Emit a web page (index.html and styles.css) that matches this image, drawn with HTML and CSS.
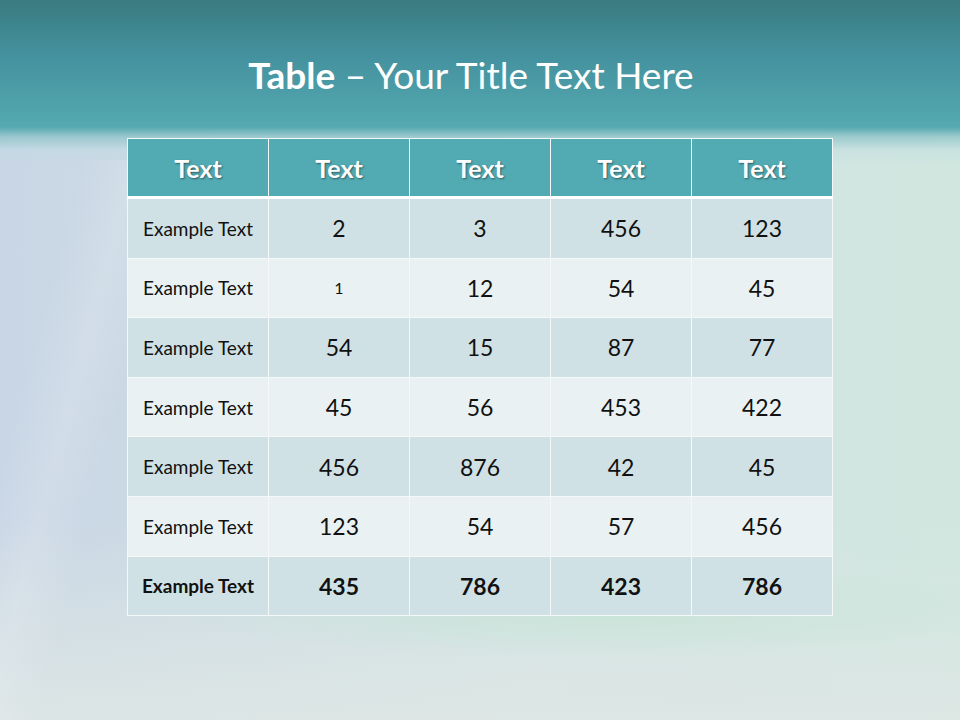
FILE: index.html
```html
<!DOCTYPE html>
<html>
<head>
<meta charset="utf-8">
<link rel="stylesheet" href="styles.css">
</head>
<body>
<div class="slide">
  <div class="band"></div>
  <div class="streak"></div>
  <div class="glow"></div>
  <div class="content">
    <h1 class="title"><b>Table</b> – Your Title Text Here</h1>
    <table class="grid">
      <thead>
        <tr><th>Text</th><th>Text</th><th>Text</th><th>Text</th><th>Text</th></tr>
      </thead>
      <tbody>
        <tr class="dark"><td class="lab">Example Text</td><td>2</td><td>3</td><td>456</td><td>123</td></tr>
        <tr class="light"><td class="lab">Example Text</td><td class="small">1</td><td>12</td><td>54</td><td>45</td></tr>
        <tr class="dark"><td class="lab">Example Text</td><td>54</td><td>15</td><td>87</td><td>77</td></tr>
        <tr class="light"><td class="lab">Example Text</td><td>45</td><td>56</td><td>453</td><td>422</td></tr>
        <tr class="dark"><td class="lab">Example Text</td><td>456</td><td>876</td><td>42</td><td>45</td></tr>
        <tr class="light"><td class="lab">Example Text</td><td>123</td><td>54</td><td>57</td><td>456</td></tr>
        <tr class="dark total"><td class="lab">Example Text</td><td>435</td><td>786</td><td>423</td><td>786</td></tr>
      </tbody>
    </table>
  </div>
</div>
</body>
</html>
```
FILE: styles.css
```css
html, body {
  margin: 0;
  padding: 0;
}
body {
  width: 960px;
  height: 720px;
  overflow: hidden;
  font-family: Lato, "Open Sans", sans-serif;
}
.slide {
  position: relative;
  width: 960px;
  height: 720px;
  background:
    linear-gradient(180deg, rgba(221,230,228,0) 520px, rgba(222,231,229,0.9) 720px),
    linear-gradient(90deg, #c9d6e5 0%, #cddbe4 25%, #d2e2e4 55%, #d0e7df 100%);
  overflow: hidden;
}
.band {
  position: absolute;
  left: 0;
  top: 0;
  width: 960px;
  height: 165px;
  background: linear-gradient(180deg, #3a7b80 0px, #4593a0 60px, #52a6ad 118px, #56a9b0 127px, rgba(140,195,200,0.75) 137px, rgba(190,220,225,0.4) 150px, rgba(205,225,230,0) 165px);
}
.streak {
  position: absolute;
  left: -40px;
  top: 160px;
  width: 200px;
  height: 560px;
  background: linear-gradient(105deg, rgba(255,255,255,0) 35%, rgba(255,255,255,0.14) 50%, rgba(255,255,255,0) 65%);
}
.glow {
  position: absolute;
  left: 150px;
  top: 560px;
  width: 900px;
  height: 100px;
  border-radius: 50%;
  background: radial-gradient(ellipse at center, rgba(195,228,212,0.7) 0%, rgba(200,230,215,0) 70%);
}
.content {
  position: relative;
  display: flex;
  flex-direction: column;
  align-items: center;
}
.title {
  margin: 51px 0 0 -18px;
  height: 87px;
  font-weight: normal;
  font-size: 37px;
  line-height: 48px;
  color: #ffffff;
}
.title b {
  font-weight: bold;
}
.grid {
  border-collapse: collapse;
  border: 1px solid #f1f6f7;
}
.grid th, .grid td {
  width: 140px;
  padding: 0;
  text-align: center;
  border: 1px solid #f4f8f8;
}
.grid th {
  height: 57px;
  background: #52aab3;
  color: #ffffff;
  font-weight: bold;
  font-size: 25px;
  text-shadow: 1px 1px 2px rgba(0,0,0,0.45);
  border-bottom: 3px solid #ffffff;
}
.grid td {
  height: 58.6px;
  font-size: 23px;
  color: #111;
}
.grid td.lab {
  font-size: 19px;
}
.grid td.small {
  font-size: 16px;
}
.dark td { background: #d0e1e5; }
.light td { background: #e9f1f3; }
.total td { font-weight: bold; }
```
